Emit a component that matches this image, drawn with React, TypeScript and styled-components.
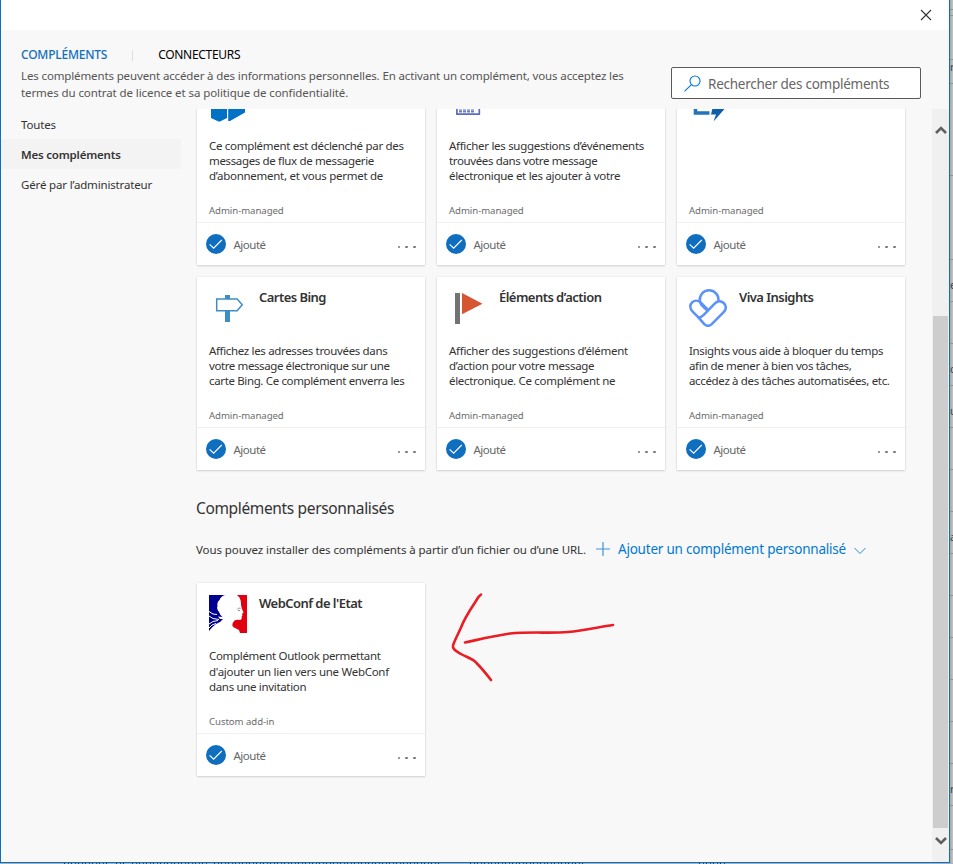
import React from "react";
import styled, { createGlobalStyle } from "styled-components";

const Global = createGlobalStyle`
  * { box-sizing: border-box; }
  body {
    margin: 0;
    overflow: hidden;
    font-family: "Noto Sans", "Open Sans", sans-serif;
    font-size: 11.5px;
    color: #333;
  }
  svg { display: block; flex: none; }
`;

const Desktop = styled.div`
  width: 953px;
  height: 864px;
  display: grid;
  grid-template-columns: 950px 3px;
  grid-template-rows: 863px 1px;
  overflow: hidden;
`;

const Dialog = styled.div`
  border: 1px solid #106ebe;
  border-top: 0;
  background: #f8f8f8;
  display: flex;
  flex-direction: column;
  min-height: 0;
`;

const Behind = styled.div`
  background: linear-gradient(90deg, #a6a6a6, #c4c4c4);
  display: flex;
  flex-direction: column;
  overflow: hidden;
`;

const BehindRow = styled.div<{ $h: number }>`
  height: ${(p) => p.$h}px;
  flex: none;
  border-bottom: 1px solid #939393;
  display: flex;
  align-items: flex-end;
  padding-bottom: ${(p) => (p.$h > 20 ? 10 : 0)}px;
  font-size: 11px;
  line-height: 12px;
  white-space: nowrap;
  color: #444;
`;

const BehindBottom = styled.div`
  grid-column: 1 / 3;
  background: #a9b0b6;
  display: flex;
`;

const Specks = styled.div<{ $w: number; $gap: number }>`
  width: ${(p) => p.$w}px;
  margin-left: ${(p) => p.$gap}px;
  background: repeating-linear-gradient(90deg, #26384d 0 1px, #a9b0b6 1px 4px, #3c4a58 4px 5px, #a9b0b6 5px 7px);
`;

const TitleBar = styled.div`
  height: 30px;
  flex: none;
  background: #fff;
  display: flex;
  justify-content: flex-end;
  align-items: center;
  padding-right: 17px;
`;

const Header = styled.div`
  height: 79px;
  flex: none;
  display: flex;
  justify-content: space-between;
  padding: 15px 28px 0 20px;
`;

const TabList = styled.div`
  display: flex;
  align-items: center;
  height: 20px;
`;

const Tab = styled.span<{ $active?: boolean }>`
  font-size: 12px;
  line-height: 20px;
  font-weight: ${(p) => (p.$active ? 500 : 400)};
  letter-spacing: ${(p) => (p.$active ? -0.22 : -0.3)}px;
  color: ${(p) => (p.$active ? "#106ebe" : "#000")};
`;

const TabDivider = styled.span`
  width: 1px;
  height: 11px;
  background: #ddd;
  margin: 0 25px;
`;

const Notice = styled.div`
  line-height: 17px;
  letter-spacing: -0.13px;
  color: #555;
  margin-top: 2px;
  white-space: nowrap;
`;

const NoticeEnd = styled.span`
  letter-spacing: -0.09px;
`;

const SearchBox = styled.div`
  width: 250px;
  height: 32px;
  margin-top: 22px;
  border: 1px solid #5a5a5a;
  border-radius: 2px;
  background: #fff;
  display: flex;
  align-items: center;
  padding-left: 12px;
  gap: 7px;
  color: #666;
  font-size: 13.5px;
  letter-spacing: -0.25px;
`;

const Placeholder = styled.span`
  padding-top: 2px;
`;

const Body = styled.div`
  flex: 1;
  min-height: 0;
  display: flex;
`;

const Sidebar = styled.nav`
  width: 180px;
  flex: none;
`;

const NavItem = styled.div<{ $active?: boolean }>`
  height: 30px;
  padding: 1px 0 0 20px;
  line-height: 30px;
  letter-spacing: ${(p) => (p.$active ? -0.2 : -0.16)}px;
  font-weight: ${(p) => (p.$active ? 600 : 400)};
  background: ${(p) => (p.$active ? "#f3f3f3" : "transparent")};
`;

const Content = styled.main`
  flex: 1;
  min-width: 0;
  overflow: hidden;
  padding-left: 16px;
`;

const CardGrid = styled.div<{ $top: number }>`
  display: grid;
  grid-template-columns: repeat(3, 228px);
  gap: 12px;
  margin-top: ${(p) => p.$top}px;
`;

const CardBox = styled.article`
  height: 193px;
  background: #fff;
  box-shadow: 0 1px 2px rgba(0, 0, 0, 0.14), 0 0 2px rgba(0, 0, 0, 0.09);
  display: flex;
  flex-direction: column;
`;

const CardHead = styled.div`
  display: flex;
  gap: 12px;
  padding: 12px 12px 0;
  height: 66px;
`;

const CardTitle = styled.div`
  font-size: 13px;
  line-height: 17px;
  font-weight: 600;
  letter-spacing: -0.54px;
  white-space: nowrap;
`;

const Description = styled.div<{ $loose?: boolean }>`
  height: 62px;
  padding-left: 12px;
  line-height: ${(p) => (p.$loose ? 15.5 : 15)}px;
  margin-top: ${(p) => (p.$loose ? -1 : 0)}px;
  margin-bottom: ${(p) => (p.$loose ? 1 : 0)}px;
  white-space: nowrap;
`;

const Line = styled.div<{ $track: number }>`
  letter-spacing: ${(p) => p.$track}px;
`;

const Meta = styled.div`
  height: 22px;
  padding: 4px 0 0 12px;
  font-size: 9.6px;
  line-height: 14px;
  letter-spacing: -0.05px;
  color: #6b6b6b;
`;

const CardFoot = styled.div`
  flex: 1;
  border-top: 1px solid #f0f0f0;
  display: flex;
  align-items: center;
  padding: 0 9.5px 0 9px;
`;

const Added = styled.span`
  flex: 1;
  margin-left: 7.5px;
  padding-top: 1px;
  color: #666;
  letter-spacing: -0.5px;
`;

const Dots = styled.div`
  display: flex;
  gap: 5px;
  margin-top: 6px;
`;

const Dot = styled.i`
  width: 2.6px;
  height: 2.6px;
  border-radius: 50%;
  background: #777;
`;

const SectionTitle = styled.h2`
  margin: 26px 0 0 -1px;
  font-size: 15.5px;
  line-height: 24px;
  font-weight: 400;
  letter-spacing: -0.35px;
`;

const InstallRow = styled.div`
  display: flex;
  align-items: center;
  height: 24px;
  margin: 17px 0 0 -1px;
  white-space: nowrap;
`;

const InstallText = styled.span`
  width: 400px;
  letter-spacing: -0.075px;
`;

const AddLink = styled.span`
  width: 228px;
  margin: 0 8px;
  color: #0078d4;
  font-size: 13.5px;
  letter-spacing: -0.22px;
`;

const Chevron = styled.svg`
  margin-top: 4px;
`;

const CustomRow = styled.div`
  display: flex;
  align-items: flex-start;
  margin-top: 22px;
`;

const CardSlot = styled.div`
  width: 228px;
  flex: none;
`;

const ArrowSlot = styled.div`
  margin: 7px 0 0 22px;
`;

const ScrollBar = styled.div`
  width: 17px;
  flex: none;
  background: #f0f0f0;
  display: flex;
  flex-direction: column;
  align-items: center;
  padding: 16px 1px;
`;

const Thumb = styled.div`
  width: 15px;
  height: 512px;
  flex: none;
  margin: 181px 0 8px;
  background: #cdcdcd;
`;

const Check = () => (
  <svg width="20" height="20" viewBox="0 0 20 20">
    <circle cx="10" cy="10" r="10" fill="#106ebe" />
    <path d="M3.600 10.400 7.600 14.200 15.800 6" fill="none" stroke="#fff" strokeWidth="1.1" />
  </svg>
);

const FlowIcon = () => (
  <svg width="38" height="38" viewBox="0 0 38 38">
    <path d="M2 6h16v28l-7 3.500h-1.500L2 34z M19.200 6 36 15v13.500L21 37h-1.800z" fill="#0072c6" />
  </svg>
);

const CalendarIcon = () => (
  <svg width="38" height="38" viewBox="0 0 38 38">
    <path d="M7.900 8h22.400v22.100H7.900z" fill="#fff" stroke="#5c6bc0" strokeWidth="1.700" />
    <path d="M10 24.300h15M10 27.300h15" stroke="#6d7bc9" strokeWidth="2.200" strokeDasharray="3 1" />
  </svg>
);

const BoltIcon = () => (
  <svg width="38" height="38" viewBox="0 0 38 38">
    <path d="M6.500 8v21H20.500" fill="none" stroke="#2573b8" strokeWidth="3.600" />
    <path d="M25 18h8l-1.500 7H35.500L24.500 37.500 27 30.500H22z" fill="#0f5ea8" />
  </svg>
);

const SignIcon = () => (
  <svg width="38" height="38" viewBox="0 0 38 38">
    <path d="M16 6h5v4h-5zM16 22h5v11h-5z" fill="#3e8ec4" />
    <path d="M7.700 10h20.500l5 5.800-5 5.900H7.700z" fill="#fff" stroke="#3e8ec4" strokeWidth="1.500" />
  </svg>
);

const FlagIcon = () => (
  <svg width="38" height="38" viewBox="0 0 38 38">
    <path d="M6 4h5v31H6z" fill="#737373" />
    <path d="M13 4l20.500 10.700L13 25.300z" fill="#d65532" />
  </svg>
);

const VivaIcon = () => (
  <svg width="38" height="38" viewBox="0 0 38 38" fill="none" stroke="#5b92fa" strokeWidth="2.5" strokeLinecap="round" strokeLinejoin="round">
    <path d="M10.800 12.200C10.100 6.200 14.400 1.300 20 1.300s10 4.600 9.500 10.300" />
    <path d="M10.800 12.200c.4 3.400 2.900 5.100 4.400 6.500l3.400 2.800" />
    <path d="M9.600 28.600 3.700 22.700c-3-3-3.200-7.100-.4-9.500 2.500-2.200 6-2.100 8.600.4l6.700 6.700" />
    <path d="M9.600 28.600c2.400 0 4-1.600 5.400-3l10.700-11c2.700-2.800 6.400-3 9-.6 2.800 2.600 2.700 6.200.2 8.800L22.700 35.100c-2.300 2.100-5.200 2.100-7.400 0z" />
  </svg>
);

const MarianneIcon = () => (
  <svg width="38" height="38" viewBox="0 0 38 38">
    <path d="M0 0H38V38H0z" fill="#fff" />
    <path d="M0 0H16C13 1 11.500 2.500 10.500 5 8.500 6.500 8 9 8.500 11 7.500 13 8.500 15 10 17L11.500 20 13.500 22 9 21.500 11 24H14L11 27 7 29 3 32.500 0 36z" fill="#000091" />
    <path d="M0 16.500 4 19 8 19.500M0 21 4 23.500 10 24.500M0 29 4 26.500 9 25.500M0 33 3 30 7 28.500" stroke="#fff" strokeWidth="1" fill="none" />
    <path d="M28 0H38V38H31L30 35 25 32.500C23 31.500 23 29.500 24 27.500L25.500 25.500 28 24.800 31.500 25 32.800 23.500 32.600 21.500 33.500 20.500 33 19 34.500 17.500 33 14 32.200 11 31.800 6 30.500 2.500z" fill="#e1000f" />
    <path d="M28 14.500C29 13 30.500 13 31.500 13.500M29 15.500H31" stroke="#888" strokeWidth=".9" fill="none" />
  </svg>
);

type Addin = {
  title: string;
  icon: React.ReactNode;
  lines: [string, number][];
  meta?: string;
  loose?: boolean;
};

const Card = ({ title, icon, lines, meta = "Admin-managed", loose }: Addin) => (
  <CardBox>
    <CardHead>
      {icon}
      <CardTitle>{title}</CardTitle>
    </CardHead>
    <Description $loose={loose}>
      {lines.map(([text, track]) => (
        <Line key={text} $track={track}>{text}</Line>
      ))}
    </Description>
    <Meta>{meta}</Meta>
    <CardFoot>
      <Check />
      <Added>Ajouté</Added>
      <Dots><Dot /><Dot /><Dot /></Dots>
    </CardFoot>
  </CardBox>
);

const addins: Addin[] = [
  { title: "", icon: <FlowIcon />, lines: [["Ce complément est déclenché par des", -0.3], ["messages de flux de messagerie", -0.35], ["d’abonnement, et vous permet de", -0.28]] },
  { title: "", icon: <CalendarIcon />, lines: [["Afficher les suggestions d’événements", -0.3], ["trouvées dans votre message", -0.37], ["électronique et les ajouter à votre", -0.3]] },
  { title: "", icon: <BoltIcon />, lines: [] },
  { title: "Cartes Bing", icon: <SignIcon />, lines: [["Affichez les adresses trouvées dans", -0.34], ["votre message électronique sur une", -0.4], ["carte Bing. Ce complément enverra les", -0.36]] },
  { title: "Éléments d’action", icon: <FlagIcon />, lines: [["Afficher des suggestions d’élément", -0.28], ["d’action pour votre message", -0.28], ["électronique. Ce complément ne", -0.31]] },
  { title: "Viva Insights", icon: <VivaIcon />, lines: [["Insights vous aide à bloquer du temps", -0.34], ["afin de mener à bien vos tâches,", -0.37], ["accédez à des tâches automatisées, etc.", -0.34]] },
];

const webConf: Addin = {
  title: "WebConf de l'Etat",
  icon: <MarianneIcon />,
  lines: [["Complément Outlook permettant", -0.32], ["d'ajouter un lien vers une WebConf", -0.28], ["dans une invitation", -0.33]],
  meta: "Custom add-in",
  loose: true,
};

const behindRows: [number, string][] = [
  [10, ""], [6, ""], [44, ""], [24, "r"], [92, ""], [84, ""], [42, "e"], [42, ""], [42, "c"], [42, "u"], [42, ""], [42, ""],
  [42, "a"], [42, ""], [42, ""], [42, ""], [42, ""], [42, ""], [42, "r"], [44, ""],
];

export default function App() {
  return (
    <>
      <Global />
      <Desktop>
        <Dialog>
          <TitleBar>
            <svg width="12" height="12" viewBox="0 0 12 12">
              <path d="M1 1l10 10M11 1 1 11" stroke="#333" strokeWidth="1.1" />
            </svg>
          </TitleBar>
          <Header>
            <div>
              <TabList>
                <Tab $active>COMPLÉMENTS</Tab>
                <TabDivider />
                <Tab>CONNECTEURS</Tab>
              </TabList>
              <Notice>
                Les compléments peuvent accéder à des informations personnelles. En activant un complément, vous acceptez les
                <br />
                <NoticeEnd>termes du contrat de licence et sa politique de confidentialité.</NoticeEnd>
              </Notice>
            </div>
            <SearchBox>
              <svg width="17" height="17" viewBox="0 0 17 17" fill="none" stroke="#0078d4" strokeWidth="1.1">
                <circle cx="11" cy="6" r="5" />
                <path d="M7.400 9.600.5 16.300" />
              </svg>
              <Placeholder>Rechercher des compléments</Placeholder>
            </SearchBox>
          </Header>
          <Body>
            <Sidebar>
              <NavItem>Toutes</NavItem>
              <NavItem $active>Mes compléments</NavItem>
              <NavItem>Géré par l’administrateur</NavItem>
            </Sidebar>
            <Content>
              <CardGrid $top={-37}>
                {addins.map((a, i) => <Card key={i} {...a} />)}
              </CardGrid>
              <SectionTitle>Compléments personnalisés</SectionTitle>
              <InstallRow>
                <InstallText>Vous pouvez installer des compléments à partir d’un fichier ou d’une URL.</InstallText>
                <svg width="14" height="14" viewBox="0 0 14 14">
                  <path d="M7 0v14M0 7h14" stroke="#3a94dc" strokeWidth="1.2" />
                </svg>
                <AddLink>Ajouter un complément personnalisé</AddLink>
                <Chevron width="12" height="8" viewBox="0 0 12 8">
                  <path d="M.5 1 6 6.500 11.500 1" fill="none" stroke="#2b8bd9" />
                </Chevron>
              </InstallRow>
              <CustomRow>
                <CardSlot><Card {...webConf} /></CardSlot>
                <ArrowSlot>
                  <svg width="170" height="95" viewBox="447 590 170 95" fill="none" stroke="#ea1c24" strokeWidth="2.600" strokeLinecap="round" strokeLinejoin="round">
                    <path d="M481 594.500c-3 2-4 5-6 8-6 9-11 17-14 25-3 7-6 12-8 18-1 4 4 6 8 8.500 5 3 11 4 15 8.500 5 5 10 11 15 17.500" />
                    <path d="M465 642.500c14-3 28-6.500 45-9 20-2 40 0 58-1.500 16-1.500 31-5 45-7" />
                  </svg>
                </ArrowSlot>
              </CustomRow>
            </Content>
            <ScrollBar>
              <svg width="12" height="10" viewBox="0 0 12 10">
                <path d="M1 8 6 3l5 5" fill="none" stroke="#606060" strokeWidth="2.600" />
              </svg>
              <Thumb />
              <svg width="12" height="10" viewBox="0 0 12 10">
                <path d="M1 2 6 7l5-5" fill="none" stroke="#606060" strokeWidth="2.600" />
              </svg>
            </ScrollBar>
          </Body>
        </Dialog>
        <Behind>
          {behindRows.map(([h, t], i) => <BehindRow key={i} $h={h}>{t}</BehindRow>)}
        </Behind>
        <BehindBottom>
          <Specks $gap={64} $w={44} />
          <Specks $gap={8} $w={8} />
          <Specks $gap={8} $w={77} />
          <Specks $gap={5} $w={226} />
          <Specks $gap={30} $w={113} />
          <Specks $gap={116} $w={28} />
        </BehindBottom>
      </Desktop>
    </>
  );
}
